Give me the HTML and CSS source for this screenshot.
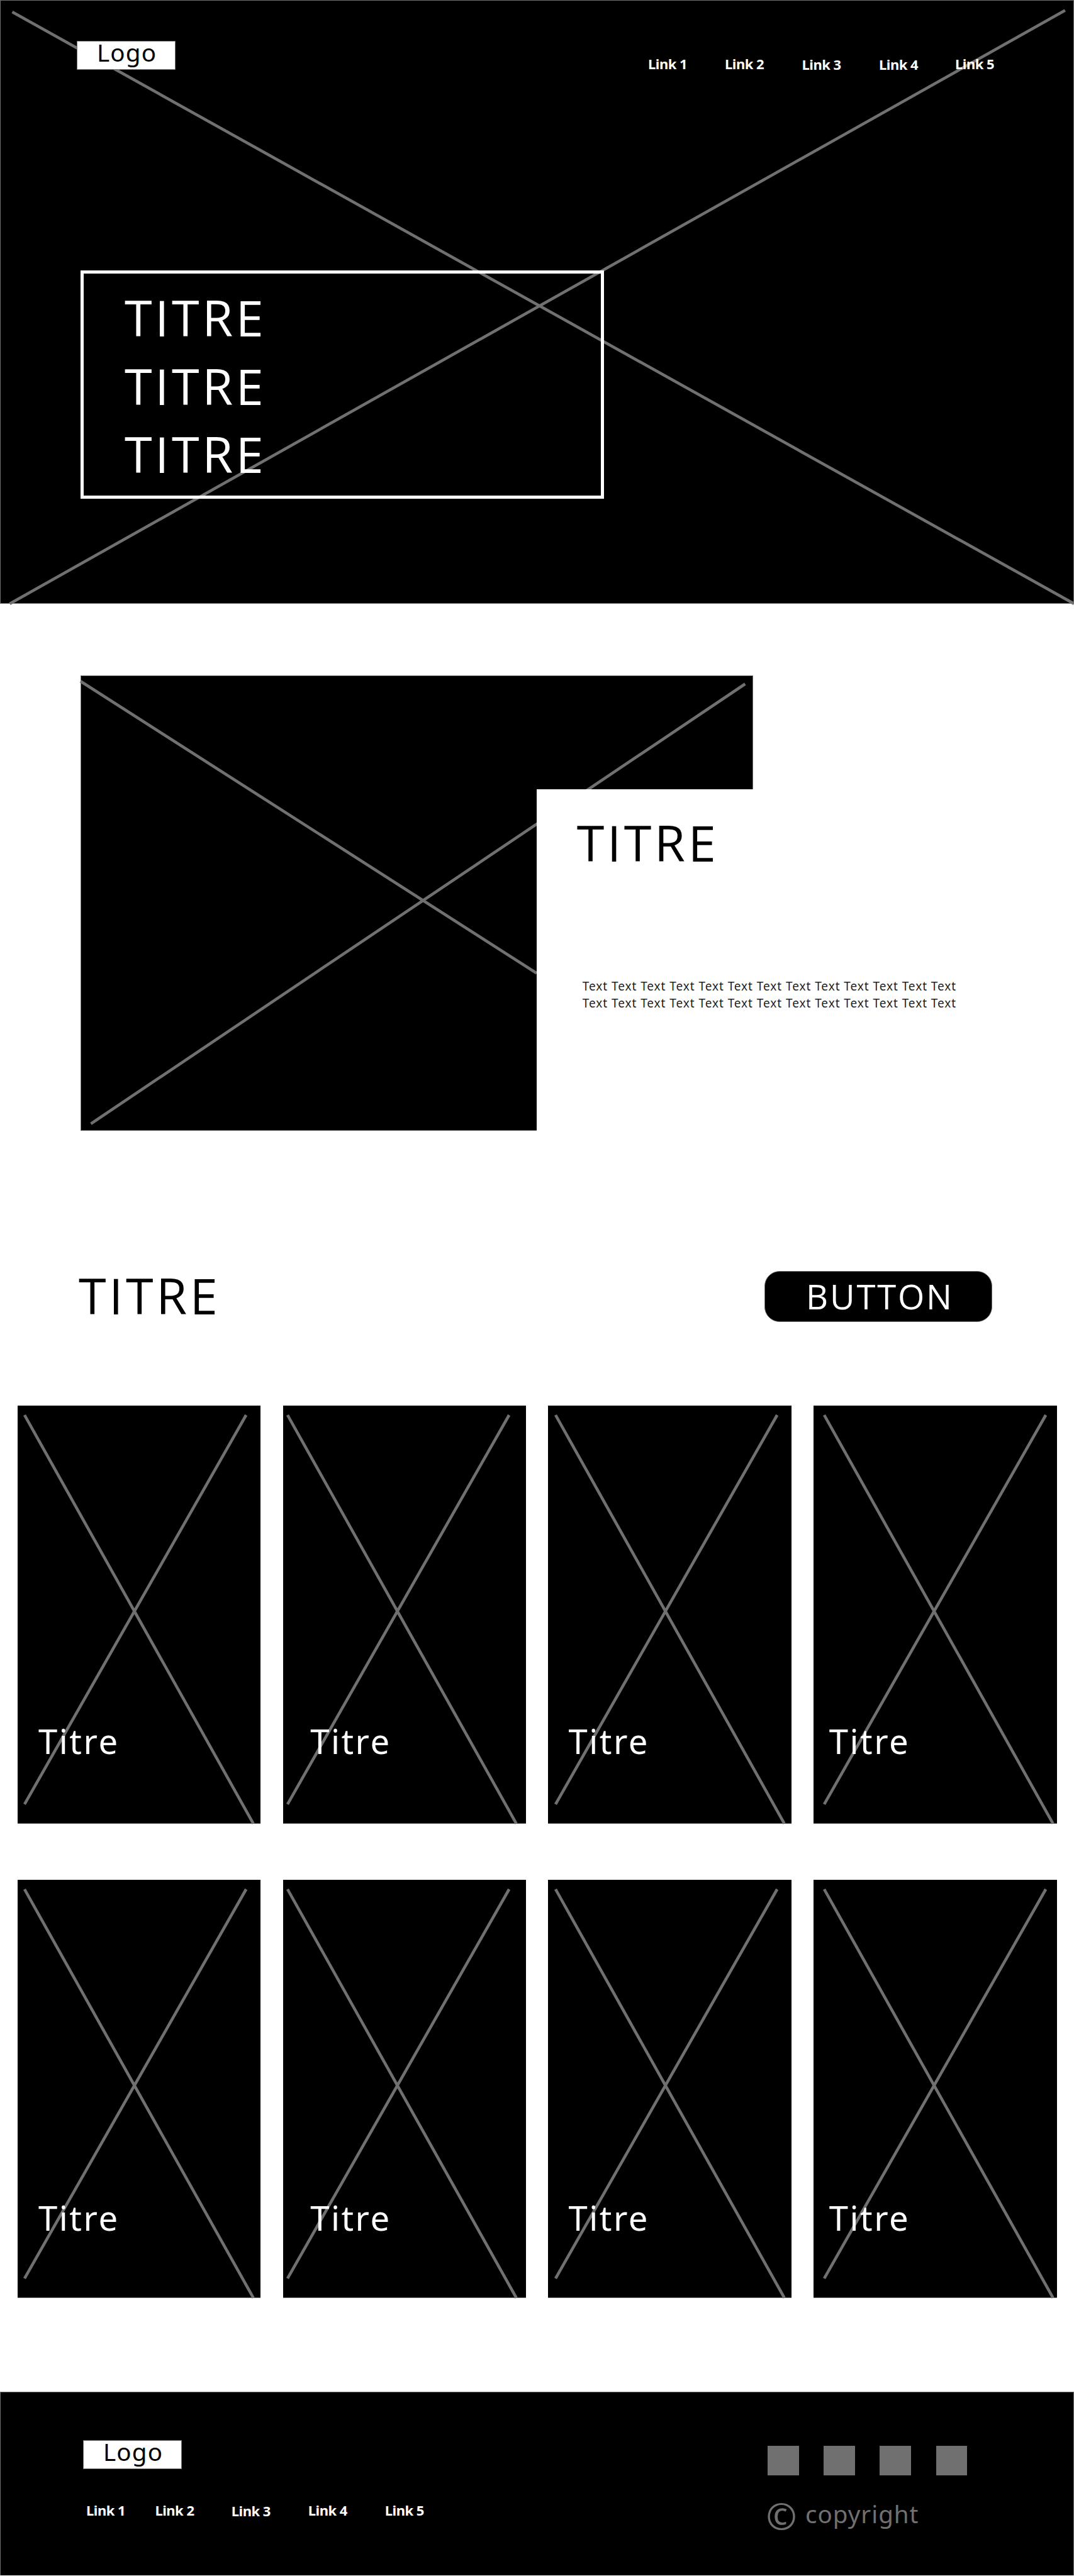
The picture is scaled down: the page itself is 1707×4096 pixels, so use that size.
FILE: index.html
```html
<!DOCTYPE html>
<html lang="fr">
<head>
<meta charset="utf-8">
<title>Titre</title>
<link rel="stylesheet" href="styles.css">
</head>
<body>
<section class="hero">
  <svg class="cross" viewBox="0 0 1707 962"><path d="M19.5 19L1707 960M1692.8 16.5L15.5 960"/></svg>
  <header class="topbar">
    <a class="logo">Logo</a>
    <nav class="nav nav-top"><a>Link 1</a><a>Link 2</a><a class="low">Link 3</a><a class="low">Link 4</a><a>Link 5</a></nav>
  </header>
  <h1 class="hero-title title">TITRE<br>TITRE<br>TITRE</h1>
</section>

<section class="feature">
  <div class="feature-image">
    <svg class="cross" viewBox="0 0 1069 724"><path d="M0 9.3L725 473.5M16.5 712.8L1056.3 13.5"/></svg>
  </div>
  <div class="feature-panel">
    <h2 class="title">TITRE</h2>
    <p class="copy">Text Text Text Text Text Text Text Text Text Text Text Text Text<br>Text Text Text Text Text Text Text Text Text Text Text Text Text</p>
  </div>
</section>

<section class="list-head">
  <h2 class="title">TITRE</h2>
  <a class="button">BUTTON</a>
</section>

<section class="cards">
  <article class="card"><svg class="cross" viewBox="0 0 364 650"><path d="M0 0L363.6 649.6M352.2 0L0 618.8"/></svg><h3>Titre</h3></article>
  <article class="card"><svg class="cross" viewBox="0 0 364 650"><path d="M0 0L363.6 649.6M352.2 0L0 618.8"/></svg><h3>Titre</h3></article>
  <article class="card"><svg class="cross" viewBox="0 0 364 650"><path d="M0 0L363.6 649.6M352.2 0L0 618.8"/></svg><h3>Titre</h3></article>
  <article class="card"><svg class="cross" viewBox="0 0 364 650"><path d="M0 0L363.6 649.6M352.2 0L0 618.8"/></svg><h3>Titre</h3></article>
  <article class="card"><svg class="cross" viewBox="0 0 364 650"><path d="M0 0L363.6 649.6M352.2 0L0 618.8"/></svg><h3>Titre</h3></article>
  <article class="card"><svg class="cross" viewBox="0 0 364 650"><path d="M0 0L363.6 649.6M352.2 0L0 618.8"/></svg><h3>Titre</h3></article>
  <article class="card"><svg class="cross" viewBox="0 0 364 650"><path d="M0 0L363.6 649.6M352.2 0L0 618.8"/></svg><h3>Titre</h3></article>
  <article class="card"><svg class="cross" viewBox="0 0 364 650"><path d="M0 0L363.6 649.6M352.2 0L0 618.8"/></svg><h3>Titre</h3></article>
</section>

<footer class="footer">
  <div class="footer-left">
    <a class="logo">Logo</a>
    <nav class="nav nav-bottom"><a>Link 1</a><a>Link 2</a><a class="low">Link 3</a><a>Link 4</a><a>Link 5</a></nav>
  </div>
  <div class="footer-right">
    <div class="socials"><i></i><i></i><i></i><i></i></div>
    <p class="copyright"><span class="mark">©</span><span>copyright</span></p>
  </div>
</footer>
</body>
</html>
```
FILE: styles.css
```css
* { box-sizing: border-box; margin: 0; padding: 0; }
body {
  width: 1707px;
  height: 4096px;
  overflow: hidden;
  background: #fff;
  color: #000;
  font-family: "Noto Sans", "Open Sans", sans-serif;
}
.title {
  font: 400 79.3px/108.5px "Open Sans", sans-serif;
  letter-spacing: 4.6px;
}
.cross {
  position: absolute;
  overflow: visible;
  fill: none;
  stroke: #707070;
  stroke-width: 4.6;
}

/* Hero */
.hero {
  position: relative;
  height: 960px;
  border: 1px solid #707070;
  background: #000;
  color: #fff;
}
.hero .cross { left: -1px; top: -1px; width: 1707px; height: 962px; }
.topbar {
  position: relative;
  display: flex;
  justify-content: space-between;
  height: 429px;
  padding: 64px 0 0 121px;
}
.logo {
  width: 157px;
  height: 46px;
  padding-left: 31px;
  border: 1px solid #707070;
  background: #fff;
  color: #000;
  font-size: 38.5px;
  line-height: 34px;
  letter-spacing: 1.2px;
}
.nav {
  display: grid;
  align-items: start;
  color: #fff;
  font-size: 22px;
  font-weight: 700;
  line-height: 30px;
  letter-spacing: -0.5px;
  white-space: nowrap;
}
.low { padding-top: 1px; }
.nav-top {
  width: 676px;
  padding-top: 20.5px;
  grid-template-columns: 122px 122.5px 122.5px 121px auto;
}
.hero-title {
  position: relative;
  width: 832px;
  height: 363px;
  margin-left: 127px;
  padding: 15.1px 0 0 65px;
  border: 5.5px solid #fff;
}

/* Feature */
.feature {
  display: grid;
  grid-template-columns: 853.3px 1fr;
  grid-template-rows: 181px 543px;
  padding-top: 113.6px;
}
.feature-image {
  grid-area: 1 / 1 / 3 / 3;
  position: relative;
  width: 1069px;
  margin-left: 128px;
  border: 1px solid #707070;
  background: #000;
}
.feature-image .cross { left: -1px; top: -1px; width: 1069px; height: 724px; }
.feature-panel {
  grid-area: 2 / 2;
  position: relative;
  padding: 30.6px 0 0 63.5px;
  background: #fff;
}
.copy {
  margin: 161.8px 0 0 9px;
  color: #222;
  font-size: 19px;
  line-height: 26.8px;
  letter-spacing: 0.95px;
  white-space: nowrap;
}

/* List heading */
.list-head {
  display: flex;
  justify-content: space-between;
  align-items: flex-start;
  height: 437px;
  padding: 207.4px 130px 0 125px;
}
.button {
  width: 362px;
  height: 81px;
  margin-top: 16px;
  padding-left: 65px;
  border: 1px solid #707070;
  border-radius: 24px;
  background: #000;
  color: #fff;
  font: 400 54.4px/79px "Open Sans", sans-serif;
  letter-spacing: 2.8px;
}

/* Cards */
.cards {
  display: grid;
  grid-template-columns: repeat(4, 386.7px);
  grid-template-rows: 665.5px 665.5px;
  gap: 88.5px 35.1px;
  height: 1568.2px;
  padding-left: 27.8px;
}
.card {
  --cross: 11.5px;
  --text: 33.3px;
  position: relative;
  padding: 496px 0 0 var(--text);
  border-bottom: 1px solid #707070;
  background: #000;
  color: #fff;
}
.card:nth-child(4n+2) { --cross: 7.6px; --text: 43.6px; }
.card:nth-child(4n+3) { --cross: 12px; --text: 32.2px; }
.card:nth-child(4n) { --cross: 16.9px; --text: 24.6px; }
.card:nth-child(n+5) { padding-top: 500.5px; }
.card .cross { left: var(--cross); top: 15.4px; width: 364px; height: 650px; }
.card h3 {
  position: relative;
  font-size: 54.4px;
  font-weight: 400;
  line-height: 74px;
  letter-spacing: 2.5px;
}

/* Footer */
.footer {
  display: flex;
  justify-content: space-between;
  height: 292.2px;
  border: 1px solid #707070;
  border-bottom: 0;
  background: #000;
}
.footer-left { padding: 76px 0 0 131px; }
.footer .logo { display: block; }
.nav-bottom {
  margin: 50.5px 0 0 5px;
  grid-template-columns: 109.4px 121.4px 122px 122px auto;
}
.footer-right { width: 486px; padding-top: 85px; color: #707070; }
.socials { display: flex; gap: 39.6px; }
.socials i { width: 49.6px; height: 47px; background: #707070; }
.copyright {
  display: flex;
  align-items: flex-start;
  margin-top: 31px;
  font-size: 38.5px;
  line-height: 60px;
  letter-spacing: 1px;
}
.mark { width: 62.5px; margin: 2px 0 0 -2.5px; font-size: 59px; }
```
